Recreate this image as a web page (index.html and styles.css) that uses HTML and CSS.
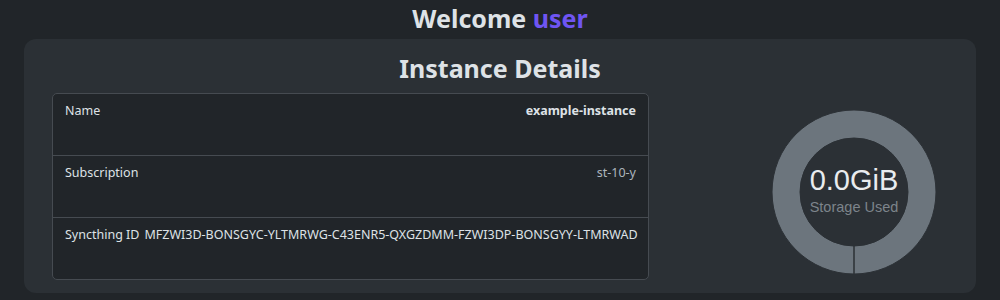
FILE: index.html
```html
<!DOCTYPE html>
<html>
<head>
  <meta charset="UTF-8">
  <title>Dashboard</title>
  <link rel="stylesheet" href="styles.css">
</head>
<body>
  <h1 class="welcome">Welcome <span class="username">user</span></h1>

  <div class="card">
    <h2 class="card-title">Instance Details</h2>
    <div class="card-body">
      <div class="details">
        <div class="detail-row">
          <span class="label">Name</span>
          <span class="value strong">example-instance</span>
        </div>
        <div class="detail-row">
          <span class="label">Subscription</span>
          <span class="value muted">st-10-y</span>
        </div>
        <div class="detail-row">
          <span class="label">Syncthing ID</span>
          <span class="value">MFZWI3D-BONSGYC-YLTMRWG-C43ENR5-QXGZDMM-FZWI3DP-BONSGYY-LTMRWAD</span>
        </div>
      </div>

      <div class="storage">
        <svg class="donut" width="168" height="168" viewBox="0 0 168 168">
          <circle cx="84" cy="84" r="68" fill="none" stroke="#6c757d" stroke-width="28"/>
          <circle cx="84" cy="84" r="82" fill="none" stroke="#2b3035" stroke-width="1"/>
          <circle cx="84" cy="84" r="54" fill="none" stroke="#2b3035" stroke-width="1"/>
          <line x1="84" y1="138" x2="84" y2="166" stroke="#2b3035" stroke-width="1.5"/>
        </svg>
        <div class="storage-text">
          <div class="storage-amount">0.0GiB</div>
          <div class="storage-label">Storage Used</div>
        </div>
      </div>
    </div>
  </div>
</body>
</html>
```

FILE: styles.css
```css
body {
  margin: 0;
  background-color: #212529;
  color: #dee2e6;
  font-family: "Noto Sans", "Open Sans", sans-serif;
  overflow: hidden;
}
.welcome {
  margin: 0;
  height: 39px;
  line-height: 36px;
  text-align: center;
  font-size: 25px;
  font-weight: 700;
  color: #dee2e6;
}
.username {
  color: #6f55f2;
}
.card {
  margin: 0 24px;
  padding: 12px 28px 13px;
  background-color: #2b3035;
  border-radius: 12px;
}
.card-title {
  margin: 0 0 8px;
  text-align: center;
  font-size: 25px;
  line-height: 34px;
  font-weight: 700;
  color: #dee2e6;
}
.card-body {
  display: flex;
  align-items: center;
}
.details {
  width: 597px;
  flex: none;
  box-sizing: border-box;
  border: 1px solid #464b51;
  border-radius: 5px;
  background-color: #212529;
}
.detail-row {
  display: flex;
  justify-content: space-between;
  gap: 5px;
  height: 61px;
  padding: 8px 12px 0;
  box-sizing: border-box;
  font-size: 12.5px;
  line-height: 18px;
  white-space: nowrap;
}
.detail-row + .detail-row {
  border-top: 1px solid #464b51;
  height: 62px;
}
.value.strong {
  font-weight: 700;
}
.value.muted {
  color: #adb5bd;
}
.storage {
  position: relative;
  margin: 10px 0 0 121px;
  width: 168px;
  height: 168px;
}
.donut {
  display: block;
}
.storage-text {
  position: absolute;
  inset: 0;
  display: flex;
  flex-direction: column;
  align-items: center;
  justify-content: center;
  font-family: "Liberation Sans", Arial, sans-serif;
}
.storage-amount {
  font-size: 29px;
  line-height: 30px;
  color: #e9ecef;
  margin-top: -2px;
}
.storage-label {
  margin-top: 3px;
  font-size: 14.5px;
  line-height: 18px;
  color: #7d848b;
}
```
